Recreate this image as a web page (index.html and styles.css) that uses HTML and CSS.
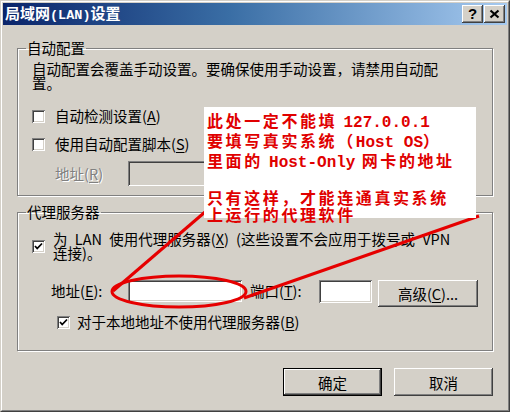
FILE: index.html
```html
<!DOCTYPE html>
<html lang="zh-CN">
<head>
<meta charset="utf-8">
<title>局域网(LAN)设置</title>
<link rel="stylesheet" href="styles.css">
</head>
<body>
<div class="window">
  <div class="frame">
    <div class="titlebar">
      <span class="title">局域网<span class="t-en">(LAN)</span>设置</span>
      <div class="tb-btns">
        <div class="tb-btn help">?</div>
        <div class="tb-btn close">
          <svg width="11" height="10" viewBox="0 0 11 10"><path d="M1.5 1.5 L9.5 8.5 M9.5 1.5 L1.5 8.5" stroke="#000" stroke-width="2.2" fill="none"/></svg>
        </div>
      </div>
    </div>
    <div class="body">
      <fieldset class="group g1">
        <legend>自动配置</legend>
        <p class="desc">自动配置会覆盖手动设置。要确保使用手动设置，请禁用自动配<br>置。</p>
        <div class="check-row r1"><span class="cb"></span><span class="ctext">自动检测设置(<u>A</u>)</span></div>
        <div class="check-row r2"><span class="cb"></span><span class="ctext">使用自动配置脚本(<u>S</u>)</span></div>
        <div class="addr-row a1">
          <span class="lbl dis-text">地址(<u>R</u>)</span>
          <span class="input disabled wide"></span>
        </div>
      </fieldset>
      <fieldset class="group g2">
        <legend>代理服务器</legend>
        <div class="check-row p1">
          <span class="cb checked"><svg width="13" height="13" viewBox="0 0 13 13"><path d="M3 6 L5.2 8.5 L10 3.5" stroke="#000" stroke-width="1.8" fill="none"/></svg></span>
          <span class="ctext two">为 LAN 使用代理服务器(<u>X</u>) (这些设置不会应用于拨号或 VPN<br>连接)。</span>
        </div>
        <div class="addr-row a2">
          <span class="lbl l2">地址(<u>E</u>):</span>
          <span class="input addr"></span>
          <span class="lbl port-lbl">端口(<u>T</u>):</span>
          <span class="input port"></span>
          <span class="btn adv">高级(<u>C</u>)...</span>
        </div>
        <div class="check-row p3">
          <span class="cb checked"><svg width="13" height="13" viewBox="0 0 13 13"><path d="M3 6 L5.2 8.5 L10 3.5" stroke="#000" stroke-width="1.8" fill="none"/></svg></span>
          <span class="ctext">对于本地地址不使用代理服务器(<u>B</u>)</span>
        </div>
      </fieldset>
      <div class="buttons">
        <span class="btn main default">确定</span>
        <span class="btn main">取消</span>
      </div>
    </div>
  </div>
  <svg class="annot" width="510" height="412" viewBox="0 0 510 412">
    <ellipse cx="179" cy="291.5" rx="67" ry="15.5" fill="none" stroke="#e60000" stroke-width="3"/>
    <path d="M113 291 L212 206" stroke="#e60000" stroke-width="3" fill="none"/>
    <path d="M244 298 L479 216" stroke="#e60000" stroke-width="3" fill="none"/>
  </svg>
  <div class="note">
    <div>此处一定不能填 <span class="en">127.0.0.1</span></div>
    <div>要填写真实系统（<span class="en">Host OS</span>）</div>
    <div>里面的 <span class="en">Host-Only</span> 网卡的地址</div>
    <div>&nbsp;</div>
    <div>只有这样，才能连通真实系统</div>
    <div>上运行的代理软件</div>
  </div>
</div>
</body>
</html>
```
FILE: styles.css
```css
* { box-sizing: border-box; }
html, body { margin: 0; padding: 0; }
body {
  background: #d4d0c8;
  font-family: "Noto Sans CJK SC", "Liberation Sans", sans-serif;
  font-size: 14.5px;
  color: #000;
}
.window {
  position: relative;
  width: 510px;
  height: 412px;
  border: 1px solid;
  border-color: #d4d0c8 #404040 #404040 #d4d0c8;
}
.frame {
  height: 100%;
  border: 1px solid;
  border-color: #fff #808080 #808080 #fff;
  padding: 1px;
  background: #d4d0c8;
}
.titlebar {
  height: 22px;
  display: flex;
  align-items: center;
  justify-content: space-between;
  padding-left: 2px;
  padding-right: 2px;
  background: linear-gradient(to right, #0a246a 0%, #3a6ea5 45%, #a6caf0 100%);
}
.title {
  color: #fff;
  font-weight: bold;
  font-size: 15px;
  line-height: 22px;
}
.t-en {
  font-family: "Liberation Mono", monospace;
  font-size: 13.5px;
}
.tb-btns { display: flex; gap: 1px; }
.tb-btn {
  width: 21px;
  height: 18px;
  background: #d4d0c8;
  box-shadow: inset -1px -1px #404040, inset 1px 1px #fff, inset -2px -2px #808080, inset 2px 2px #d4d0c8;
  display: flex;
  align-items: center;
  justify-content: center;
}
.help {
  font-family: "Liberation Sans", sans-serif;
  font-weight: bold;
  font-size: 15px;
  line-height: 18px;
}
.body {
  padding: 0 14px 0 14px;
}
.group {
  margin: 0;
  padding: 0 14px;
  border: 1px solid #808080;
  box-shadow: inset 1px 1px #fff, 1px 1px #fff;
  min-width: 0;
}
.group legend {
  padding: 0 1px;
  margin-left: -6px;
  line-height: 14px;
  font-size: 14.5px;
}
.g1 { margin-top: 16px; padding-top: 7px; padding-bottom: 9px; }
.g2 { margin-top: 9px; padding-top: 13px; padding-bottom: 21px; }
.desc {
  margin: 0;
  line-height: 14px;
  white-space: nowrap;
}
.check-row {
  display: flex;
  align-items: center;
  line-height: 14px;
}
.cb {
  flex: none;
  width: 13px;
  height: 13px;
  background: #fff;
  box-shadow: inset 1px 1px #808080, inset -1px -1px #fff, inset 2px 2px #404040, inset -2px -2px #d4d0c8;
  display: block;
}
.cb svg { display: block; }
.r1 { margin-top: 19px; height: 14px; gap: 10px; }
.r2 { margin-top: 14px; height: 14px; gap: 10px; }
.p1 { gap: 8px; }
.p1 .ctext { white-space: nowrap; word-spacing: 4px; }
.p3 { margin-top: 8px; margin-left: 25px; height: 14px; gap: 7px; }
.addr-row {
  display: flex;
  align-items: flex-start;
}
.a1 { margin-top: 10px; margin-left: 23px; }
.a1 .lbl { width: 73px; line-height: 25px; }
.dis-text { color: #808080; text-shadow: 1px 1px #fff; }
.input {
  display: block;
  background: #fff;
  box-shadow: inset 1px 1px #808080, inset -1px -1px #fff, inset 2px 2px #404040, inset -2px -2px #d4d0c8;
}
.input.disabled { background: #d4d0c8; }
.input.wide { width: 342px; height: 25px; }
.a2 { margin-top: 20px; margin-left: 19px; }
.l2 { width: 77px; line-height: 22px; }
.input.addr { width: 114px; height: 22px; }
.port-lbl { width: 69px; margin-left: 8px; line-height: 22px; }
.input.port { width: 53px; height: 23px; }
.btn {
  display: flex;
  align-items: center;
  justify-content: center;
  background: #d4d0c8;
  box-shadow: inset -1px -1px #404040, inset 1px 1px #fff, inset -2px -2px #808080, inset 2px 2px #d4d0c8;
}
.adv { width: 100px; height: 27px; margin-left: 6px; }
.buttons {
  margin-top: 17px;
  display: flex;
  justify-content: flex-end;
  gap: 12px;
}
.btn.main { width: 99px; height: 28px; }
.btn.default {
  border: 1px solid #000;
  box-shadow: inset -1px -1px #404040, inset 1px 1px #fff, inset -2px -2px #808080, inset 2px 2px #d4d0c8;
}
u { text-decoration-thickness: 1px; text-underline-offset: 2px; }
.annot {
  position: absolute;
  left: -1px;
  top: -1px;
  pointer-events: none;
}
.note {
  position: absolute;
  left: 203px;
  top: 106px;
  width: 272px;
  height: 111px;
  background: #fff;
  padding: 5px 0 0 3px;
  color: #e00000;
  font-weight: bold;
  font-size: 16px;
  line-height: 17px;
  letter-spacing: 2.6px;
  white-space: nowrap;
}
.note .en {
  font-family: "Liberation Mono", monospace;
  letter-spacing: 0;
}
```
